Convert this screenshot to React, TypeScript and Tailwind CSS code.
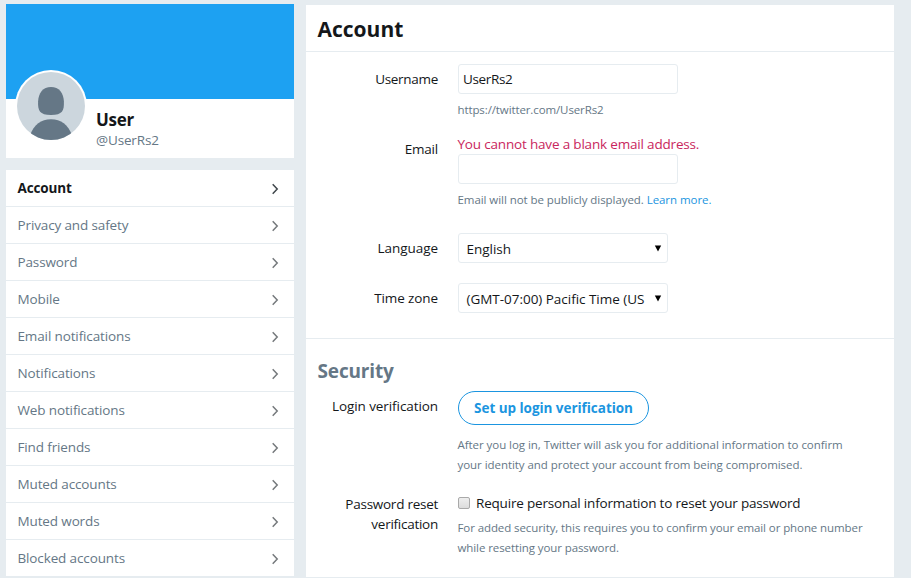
import type { ReactNode } from "react";

const navItems = [
  "Account",
  "Privacy and safety",
  "Password",
  "Mobile",
  "Email notifications",
  "Notifications",
  "Web notifications",
  "Find friends",
  "Muted accounts",
  "Muted words",
  "Blocked accounts",
];

function Chevron({ active }: { active: boolean }) {
  return (
    <svg
      width="8"
      height="12"
      viewBox="0 0 8 12"
      fill="none"
      stroke={active ? "#3f464b" : "#75797c"}
      strokeWidth="1.5"
      className="mt-0.5"
    >
      <path d="M1.7 1.3 L6.2 6 L1.7 10.7" />
    </svg>
  );
}

function Avatar() {
  return (
    <svg width="72" height="72" viewBox="0 0 72 72" className="absolute top-[66px] left-[9px]">
      <defs>
        <clipPath id="face">
          <circle cx="36" cy="36" r="34" />
        </clipPath>
      </defs>
      <circle cx="36" cy="36" r="36" fill="#fff" />
      <circle cx="36" cy="36" r="34" fill="#ccd6dd" />
      <g clipPath="url(#face)" fill="#657786">
        <path d="M36 17 C44 17 48.6 23 48.9 31.5 C49.2 40.5 47.5 45 36 45 C24.5 45 22.8 40.5 23.1 31.5 C23.4 23 28 17 36 17 Z" />
        <path d="M15 65 C19 55 26 49.3 36 49.3 C46 49.3 53 55 57 65 V72 H15 Z" />
      </g>
    </svg>
  );
}

function Field({ label, labelClass, children }: { label: string; labelClass: string; children: ReactNode }) {
  return (
    <div className="flex gap-5">
      <div className={`w-[132px] shrink-0 pl-5 text-right leading-5 ${labelClass}`}>{label}</div>
      <div className="min-w-0 flex-1">{children}</div>
    </div>
  );
}

function Help({ className, children }: { className: string; children: ReactNode }) {
  return <p className={`-ml-[0.5px] text-[11.5px] leading-5 whitespace-nowrap text-[#657786] ${className}`}>{children}</p>;
}

function Select({ value }: { value: string }) {
  return (
    <div className="flex h-[30px] w-[210px] items-center justify-between rounded-[3px] border border-[#e6ecf0] pr-[5px] pl-[7.5px]">
      <span className="pt-0.5 tracking-[-0.03px] whitespace-nowrap text-[#14171a]">{value}</span>
      <svg width="8" height="7" viewBox="0 0 8 7" fill="#000">
        <path d="M0.8 0.5 H7.2 L4 6.5 Z" />
      </svg>
    </div>
  );
}

export default function App() {
  return (
    <div className="flex h-[578px] w-[911px] items-start gap-3 overflow-hidden bg-[#e6ecf0] pl-1.5 font-['Open_Sans',sans-serif] text-[13.5px] text-[#14171a]">
      <aside className="flex w-[288px] shrink-0 flex-col gap-3 pt-1">
        <div className="relative h-[154px] bg-white">
          <div className="h-[95px] bg-[#1da1f2]" />
          <Avatar />
          <div className="pt-2.5 pl-[90px]">
            <div className="text-[17px] leading-[22px] font-bold tracking-[-0.3px]">User</div>
            <div className="-mt-px leading-5 tracking-[-0.15px] text-[#657786]">@UserRs2</div>
          </div>
        </div>
        <nav className="bg-white">
          {navItems.map((label, i) => (
            <a
              key={label}
              className={`flex h-[37px] items-center justify-between border-b border-[#e6ecf0] pr-[15px] pl-[11.5px] tracking-[-0.13px] ${
                i === 0 ? "font-bold text-[#14171a]" : "text-[#657786]"
              }`}
            >
              <span>{label}</span>
              <Chevron active={i === 0} />
            </a>
          ))}
        </nav>
      </aside>

      <main className="mt-[5px] h-[572px] w-[588px] shrink-0 bg-white">
        <h1 className="flex h-[47px] items-center border-b border-[#e6ecf0] pt-1 pl-[11.5px] text-[21px] font-bold">
          Account
        </h1>

        <section className="flex h-[287px] flex-col border-b border-[#e6ecf0] pt-3">
          <div className="h-[70px]">
            <Field label="Username" labelClass="pt-[5px] tracking-[-0.3px]">
              <div className="flex h-[30px] w-[220px] items-center rounded-[3px] border border-[#e6ecf0] pl-1 tracking-[-0.35px]">
                UserRs2
              </div>
              <Help className="mt-1.5 tracking-[-0.11px]">https://twitter.com/UserRs2</Help>
            </Field>
          </div>
          <div className="h-[99px]">
            <Field label="Email" labelClass="pt-[5px] tracking-[-0.2px]">
              <p className="-ml-[0.5px] leading-5 tracking-[-0.18px] text-[#c9265d]">
                You cannot have a blank email address.
              </p>
              <div className="h-[30px] w-[220px] rounded-[3px] border border-[#e6ecf0]" />
              <Help className="mt-1.5 tracking-[-0.06px]">
                Email will not be publicly displayed. <a className="text-[#1b95e0]">Learn more.</a>
              </Help>
            </Field>
          </div>
          <div className="h-[50px]">
            <Field label="Language" labelClass="pt-[5px] tracking-[-0.05px]">
              <Select value="English" />
            </Field>
          </div>
          <Field label="Time zone" labelClass="pt-[5px] tracking-[-0.1px]">
            <Select value="(GMT-07:00) Pacific Time (US" />
          </Field>
        </section>

        <section className="flex flex-col pt-[18px]">
          <h2 className="h-[34px] pl-[11.5px] text-[19px] leading-7 font-bold tracking-[-0.15px] text-[#657786]">
            Security
          </h2>
          <div className="h-[102px]">
            <Field label="Login verification" labelClass="pt-[5px] tracking-[-0.08px]">
              <button className="flex h-[34px] w-[191px] items-center justify-center rounded-full border border-[#1b95e0] font-bold tracking-[-0.04px] text-[#1b95e0]">
                Set up login verification
              </button>
              <Help className="mt-2.5 tracking-[-0.05px]">
                After you log in, Twitter will ask you for additional information to confirm
                <br />
                your identity and protect your account from being compromised.
              </Help>
            </Field>
          </div>
          <Field label="Password reset verification" labelClass="pt-px tracking-[-0.26px]">
            <div className="flex h-5 items-center gap-1.5">
              <span className="size-3 shrink-0 rounded-[2px] border border-[#a9a9a9] bg-gradient-to-b from-[#eeeeee] to-[#dcdcdc]" />
              <span className="tracking-[-0.19px] whitespace-nowrap">
                Require personal information to reset your password
              </span>
            </div>
            <Help className="mt-[5px] tracking-[-0.09px]">
              For added security, this requires you to confirm your email or phone number
              <br />
              while resetting your password.
            </Help>
          </Field>
        </section>
      </main>
    </div>
  );
}
